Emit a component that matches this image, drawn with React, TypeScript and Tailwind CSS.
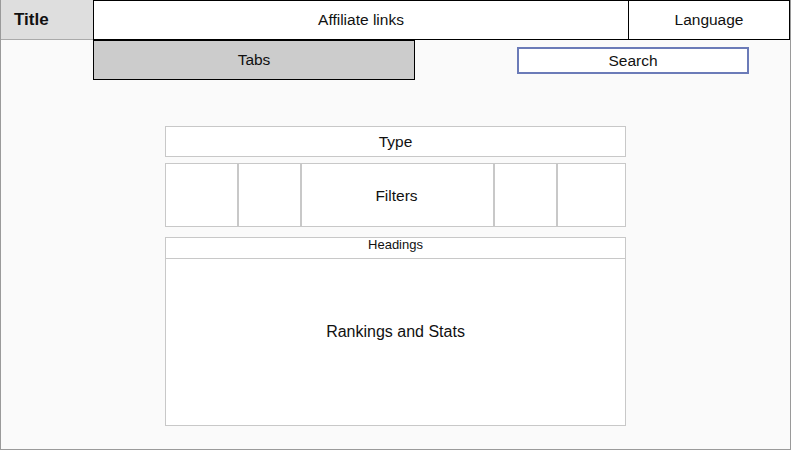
export default function App() {
  return (
    <div className="w-[793px] h-[453px] bg-white" style={{ fontFamily: '"Liberation Sans", Arial, sans-serif' }}>
      <div className="w-[791px] h-[450px] border border-[#9a9a9a] bg-[#fafafa] flex flex-col text-[#111]">
        <div className="flex h-[40px] -mt-px">
          <div className="w-[92px] bg-[#dedede] border-b border-[#aaaaaa] flex items-center pl-[13px] font-bold text-[17px]">Title</div>
          <div className="w-[536px] border border-black bg-white flex items-center justify-center text-[15.5px]">Affiliate links</div>
          <div className="flex-1 border border-l-0 border-black bg-white flex items-center justify-center text-[15.5px]">Language</div>
        </div>
        <div className="flex items-start">
          <div className="ml-[92px] w-[322px] h-[40px] border border-black bg-[#cccccc] flex items-center justify-center text-[15.5px] pb-px">Tabs</div>
          <div className="ml-[102px] mt-[7px] w-[232px] h-[27px] border-2 border-[#6b7bb8] bg-white flex items-center justify-center text-[15.5px]">Search</div>
        </div>
        <div className="mx-auto w-[461px] mt-[46px] flex flex-col">
          <div className="h-[31px] border border-[#c8c8c8] bg-white flex items-center justify-center text-[15.5px]">Type</div>
          <div className="mt-[6px] h-[64px] flex">
            <div className="w-[73px] border border-[#c8c8c8] bg-white" />
            <div className="w-[63px] border border-[#c8c8c8] bg-white" />
            <div className="w-[193px] border border-[#c8c8c8] bg-white flex items-center justify-center text-[15.5px] pt-px pr-[2px]">Filters</div>
            <div className="w-[63px] border border-[#c8c8c8] bg-white" />
            <div className="w-[69px] border border-[#c8c8c8] bg-white" />
          </div>
          <div className="mt-[10px] h-[189px] border border-[#c8c8c8] bg-white flex flex-col">
            <div className="h-[21px] border-b border-[#c8c8c8] flex justify-center text-[13px] leading-[14px]">Headings</div>
            <div className="flex-1 flex items-center justify-center text-[16px] pb-[20px]">Rankings and Stats</div>
          </div>
        </div>
      </div>
    </div>
  );
}
